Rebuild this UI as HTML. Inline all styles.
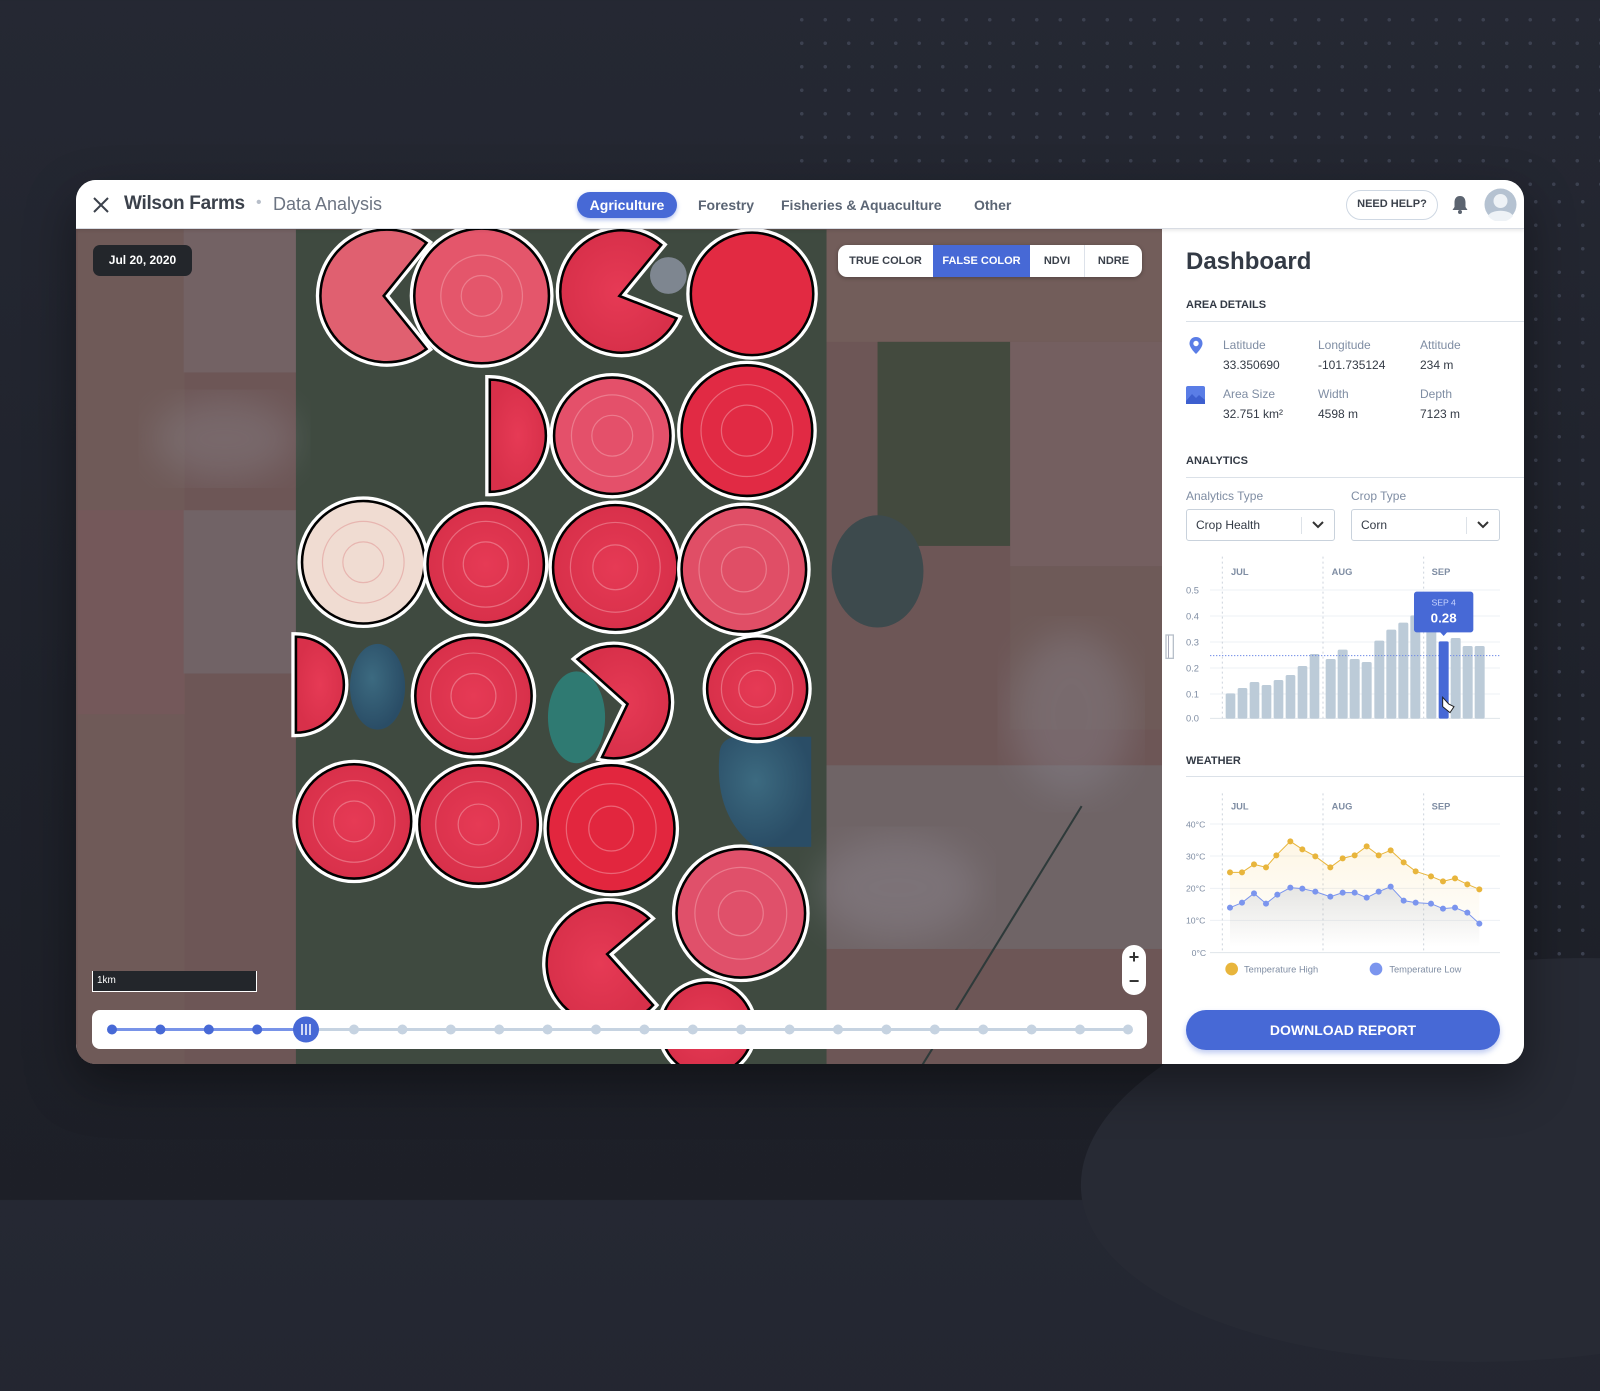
<!DOCTYPE html>
<html><head><meta charset="utf-8"><style>
*{margin:0;padding:0;box-sizing:border-box}
body{width:1600px;height:1200px;overflow:hidden;background:linear-gradient(180deg,#252833 0%,#1f222b 60%,#1d1f27 100%);font-family:"Liberation Sans",sans-serif;position:relative}
.dots{position:absolute;background-image:radial-gradient(circle,#3c4150 1.6px,transparent 2px);background-size:23.5px 23.5px}
.card{position:absolute;left:76px;top:180px;width:1448px;height:884px;background:#fff;border-radius:20px;overflow:hidden;box-shadow:0 20px 50px rgba(0,0,0,.4)}
.hdr{position:absolute;left:0;top:0;width:1448px;height:49px;border-bottom:1px solid #d8dce3;box-shadow:0 2px 3px rgba(0,0,0,.08);z-index:3;background:#fff}
.abs{position:absolute}
.t{position:absolute;white-space:nowrap}
.lbl{font-size:12px;color:#7f8da3}
.val{font-size:12px;color:#333a45}
.sec{font-size:11px;font-weight:bold;color:#333a45}
</style></head><body>
<div class="dots" style="left:790px;top:8px;width:810px;height:185px"></div>
<div class="dots" style="left:1524px;top:190px;width:76px;height:800px"></div>
<div class="abs" style="left:1080px;top:960px;width:900px;height:400px;border-radius:50%;background:#272a34;transform:rotate(-4deg)"></div>

<div class="card">
 <div class="hdr">
  <svg class="abs" style="left:16px;top:16px" width="18" height="18"><path d="M2 2L16 16M16 2L2 16" stroke="#3b414b" stroke-width="2"/></svg>
  <div class="t" style="left:48px;top:13px;font-size:19px;font-weight:bold;color:#3b414b;letter-spacing:-0.3px">Wilson Farms</div>
  <div class="t" style="left:180px;top:14px;font-size:16px;color:#b7bec9">•</div>
  <div class="t" style="left:197px;top:14px;font-size:18px;color:#6c7482">Data Analysis</div>
  <div class="t" style="left:501px;top:12px;width:100px;height:26px;border-radius:13px;background:#4769d6;color:#fff;font-size:14px;font-weight:bold;text-align:center;line-height:26px;box-shadow:0 2px 4px rgba(71,105,214,.4)">Agriculture</div>
  <div class="t" style="left:622px;top:17px;font-size:14px;font-weight:bold;color:#5b6574">Forestry</div>
  <div class="t" style="left:705px;top:17px;font-size:14px;font-weight:bold;color:#5b6574">Fisheries &amp; Aquaculture</div>
  <div class="t" style="left:898px;top:17px;font-size:14px;font-weight:bold;color:#5b6574">Other</div>
  <div class="t" style="left:1270px;top:10px;width:92px;height:30px;border-radius:15px;border:1.5px solid #cfd8e3;font-size:11px;font-weight:bold;color:#3b414b;text-align:center;line-height:27px">NEED HELP?</div>
  <svg class="abs" style="left:1375px;top:15px" width="18" height="20"><path d="M9 1C5 1 3.5 4 3.5 7.5V12L1.5 15H16.5L14.5 12V7.5C14.5 4 13 1 9 1Z" fill="#5c6470"/><circle cx="9" cy="17" r="2" fill="#5c6470"/></svg>
  <svg class="abs" style="left:1408px;top:8px" width="33" height="33"><circle cx="16.5" cy="16.5" r="16" fill="#b5c2d1"/><circle cx="16.5" cy="13" r="7" fill="#eef2f6"/><path d="M4 28C7 21 26 21 29 28A16 16 0 0 1 4 28Z" fill="#eef2f6"/></svg>
 </div>

 <div class="abs" style="left:0;top:49px;width:1086px;height:835px;overflow:hidden;background:#6a5352">
  <svg class="abs" style="left:-76px;top:-229px" width="1162" height="1064">
   <defs>
    <radialGradient id="rg" cx="50%" cy="50%" r="50%"><stop offset="0" stop-color="#e63a55"/><stop offset="1" stop-color="#d8304a"/></radialGradient>
    <radialGradient id="pond" cx="40%" cy="40%" r="60%"><stop offset="0" stop-color="#3c6a80"/><stop offset="1" stop-color="#2a4d66"/></radialGradient>
    <filter id="bl"><feGaussianBlur stdDeviation="18"/></filter>
   </defs>
   <g transform="scale(1.0204)">
    <rect x="76" y="225" width="1065" height="820" fill="#6d5656"/>
    <rect x="76" y="225" width="105" height="820" fill="#6f5a58"/>
    <rect x="76" y="500" width="105" height="200" fill="#74585a"/>
    <rect x="180" y="225" width="115" height="140" fill="#736264"/>
    <rect x="180" y="500" width="115" height="160" fill="#716366"/>
    <rect x="805" y="225" width="340" height="110" fill="#725d5a"/>
    <rect x="860" y="335" width="130" height="200" fill="#434a3e"/>
    <rect x="990" y="335" width="150" height="220" fill="#745f60"/>
    <rect x="990" y="555" width="150" height="160" fill="#6e5a58"/>
    <rect x="810" y="750" width="330" height="180" fill="#6f6466"/>
    <rect x="290" y="225" width="520" height="820" fill="#3f4a40"/>
    <ellipse cx="220" cy="430" rx="70" ry="40" fill="#8d8a92" opacity=".35" filter="url(#bl)"/>
    <ellipse cx="1050" cy="700" rx="60" ry="80" fill="#8d8a96" opacity=".35" filter="url(#bl)"/>
    <ellipse cx="880" cy="870" rx="80" ry="50" fill="#9a94a0" opacity=".3" filter="url(#bl)"/>
    <ellipse cx="860" cy="560" rx="45" ry="55" fill="#3d4a4d"/>
    <path d="M1060 790L900 1050" stroke="#2e3a3a" stroke-width="2"/>
    <ellipse cx="370" cy="673" rx="27" ry="42" fill="url(#pond)"/>
    <ellipse cx="565" cy="703" rx="28" ry="45" fill="#2f7a72"/>
    <path d="M705 740Q705 725 720 722L795 722V830L740 830Q700 800 705 740Z" fill="url(#pond)"/>
    <circle cx="655" cy="270" r="18" fill="#7e8690"/>
    <g stroke="#000" stroke-width="2.5">
     <g fill="url(#rg)">
      <path d="M418 238A65 65 0 1 0 418 342L376 290Z" fill="#e06070" stroke="#fff" stroke-width="9"/>
      <path d="M418 238A65 65 0 1 0 418 342L376 290Z" fill="#e06070"/>
      <circle cx="472" cy="290" r="66" fill="#e4566b" stroke="#fff" stroke-width="9"/><circle cx="472" cy="290" r="66" fill="#e4566b"/>
      <path d="M648 240A60 60 0 1 0 663 312L607 290Z" stroke="#fff" stroke-width="9"/><path d="M648 240A60 60 0 1 0 663 312L607 290Z"/>
      <circle cx="737" cy="288" r="60" stroke="#fff" stroke-width="9"/><circle cx="737" cy="288" r="60" fill="#e22a42"/>
      <path d="M480 372A55 55 0 0 1 480 482Z" stroke="#fff" stroke-width="9"/><path d="M480 372A55 55 0 0 1 480 482Z"/>
      <circle cx="600" cy="427" r="57" stroke="#fff" stroke-width="9"/><circle cx="600" cy="427" r="57" fill="#e4506a"/>
      <circle cx="732" cy="422" r="64" stroke="#fff" stroke-width="9"/><circle cx="732" cy="422" r="64" fill="#e12a44"/>
      <circle cx="356" cy="551" r="60" fill="#f2dfd6" stroke="#fff" stroke-width="9"/><circle cx="356" cy="551" r="60" fill="#f0dcd2"/>
      <circle cx="476" cy="553" r="57" stroke="#fff" stroke-width="9"/><circle cx="476" cy="553" r="57"/>
      <circle cx="603" cy="556" r="61" stroke="#fff" stroke-width="9"/><circle cx="603" cy="556" r="61"/>
      <circle cx="729" cy="558" r="61" stroke="#fff" stroke-width="9"/><circle cx="729" cy="558" r="61" fill="#e04e66"/>
      <path d="M290 624A45 45 0 0 1 290 718Z" stroke="#fff" stroke-width="9"/><path d="M290 624A45 45 0 0 1 290 718Z"/>
      <circle cx="464" cy="682" r="57" stroke="#fff" stroke-width="9"/><circle cx="464" cy="682" r="57"/>
      <path d="M566 646A55 55 0 1 1 590 742L615 690Z" stroke="#fff" stroke-width="9"/><path d="M566 646A55 55 0 1 1 590 742L615 690Z"/>
      <circle cx="742" cy="675" r="49" stroke="#fff" stroke-width="9"/><circle cx="742" cy="675" r="49"/>
      <circle cx="347" cy="805" r="56" stroke="#fff" stroke-width="9"/><circle cx="347" cy="805" r="56"/>
      <circle cx="469" cy="808" r="58" stroke="#fff" stroke-width="9"/><circle cx="469" cy="808" r="58"/>
      <circle cx="599" cy="812" r="62" stroke="#fff" stroke-width="9"/><circle cx="599" cy="812" r="62" fill="#e2263e"/>
      <circle cx="726" cy="895" r="63" stroke="#fff" stroke-width="9"/><circle cx="726" cy="895" r="63" fill="#e0506a"/>
      <path d="M636 900A60 60 0 1 0 640 985L595 935Z" stroke="#fff" stroke-width="9"/><path d="M636 900A60 60 0 1 0 640 985L595 935Z"/>
      <circle cx="693" cy="1008" r="45" stroke="#fff" stroke-width="9"/><circle cx="693" cy="1008" r="45"/>
     </g>
    </g>
    <g fill="none" stroke="#f7b0b8" stroke-width="1.2" opacity=".45">
     <circle cx="472" cy="290" r="20"/><circle cx="472" cy="290" r="40"/><circle cx="600" cy="427" r="20"/><circle cx="600" cy="427" r="40"/>
     <circle cx="732" cy="422" r="25"/><circle cx="732" cy="422" r="45"/><circle cx="476" cy="553" r="22"/><circle cx="476" cy="553" r="42"/>
     <circle cx="603" cy="556" r="22"/><circle cx="603" cy="556" r="44"/><circle cx="729" cy="558" r="22"/><circle cx="729" cy="558" r="44"/>
     <circle cx="464" cy="682" r="22"/><circle cx="464" cy="682" r="42"/><circle cx="742" cy="675" r="18"/><circle cx="742" cy="675" r="35"/>
     <circle cx="347" cy="805" r="20"/><circle cx="347" cy="805" r="40"/><circle cx="469" cy="808" r="20"/><circle cx="469" cy="808" r="42"/>
     <circle cx="599" cy="812" r="22"/><circle cx="599" cy="812" r="44"/><circle cx="726" cy="895" r="22"/><circle cx="726" cy="895" r="45"/>
     <circle cx="356" cy="551" r="20" stroke="#d88"/><circle cx="356" cy="551" r="40" stroke="#d88"/>
    </g>
   </g>
  </svg>
  <div class="t" style="left:17px;top:16px;width:99px;height:31px;border-radius:7px;background:#23262b;color:#fff;font-size:12px;font-weight:bold;text-align:center;line-height:31px">Jul 20, 2020</div>
  <div class="abs" style="left:762px;top:16px;width:304px;height:32px;border-radius:9px;background:#fff;overflow:hidden;font-size:11px;font-weight:bold;color:#3b414b;box-shadow:0 1px 4px rgba(0,0,0,.3)">
   <div class="t" style="left:0;top:0;width:95px;height:32px;line-height:32px;text-align:center">TRUE COLOR</div>
   <div class="t" style="left:95px;top:0;width:97px;height:32px;line-height:32px;text-align:center;background:#4769d6;color:#fff">FALSE COLOR</div>
   <div class="t" style="left:192px;top:0;width:55px;height:32px;line-height:32px;text-align:center;border-right:1px solid #dde2ea">NDVI</div>
   <div class="t" style="left:247px;top:0;width:57px;height:32px;line-height:32px;text-align:center">NDRE</div>
  </div>
  <div class="t" style="left:16px;top:742px;width:165px;height:21px;background:#23262b;border:1.5px solid #fff;border-top:none;color:#fff;font-size:10px;padding:4px 4px">1km</div>
  <div class="abs" style="left:1046px;top:716px;width:24px;height:50px;border-radius:12px;background:#fff;font-size:18px;color:#333;text-align:center;line-height:24px;font-weight:bold">+<br>−</div>
  <div class="abs" style="left:16px;top:781px;width:1055px;height:39px;border-radius:8px;background:#fff"></div>
  <svg class="abs" style="left:16px;top:781px" width="1055" height="39">
   <line x1="20" y1="19.5" x2="1036" y2="19.5" stroke="#c6d3e1" stroke-width="3"/>
   <line x1="20" y1="19.5" x2="214" y2="19.5" stroke="#7893e8" stroke-width="3"/>
   <g fill="#4769d6"><circle cx="20" cy="19.5" r="5"/><circle cx="68.4" cy="19.5" r="5"/><circle cx="116.8" cy="19.5" r="5"/><circle cx="165.2" cy="19.5" r="5"/></g>
   <g fill="#c6d3e1">
    <circle cx="262" cy="19.5" r="5"/><circle cx="310.4" cy="19.5" r="5"/><circle cx="358.8" cy="19.5" r="5"/><circle cx="407.2" cy="19.5" r="5"/><circle cx="455.6" cy="19.5" r="5"/><circle cx="504" cy="19.5" r="5"/><circle cx="552.4" cy="19.5" r="5"/><circle cx="600.8" cy="19.5" r="5"/><circle cx="649.2" cy="19.5" r="5"/><circle cx="697.6" cy="19.5" r="5"/><circle cx="746" cy="19.5" r="5"/><circle cx="794.4" cy="19.5" r="5"/><circle cx="842.8" cy="19.5" r="5"/><circle cx="891.2" cy="19.5" r="5"/><circle cx="939.6" cy="19.5" r="5"/><circle cx="988" cy="19.5" r="5"/><circle cx="1036" cy="19.5" r="5"/>
   </g>
   <circle cx="214" cy="19.5" r="13" fill="#4769d6"/>
   <path d="M210 14V25M214 14V25M218 14V25" stroke="#fff" stroke-width="1.5"/>
  </svg>
 </div>

 <div class="abs" style="left:1086px;top:49px;width:362px;height:835px;background:#fff">
  <div class="t" style="left:24px;top:19px;font-size:24px;font-weight:bold;color:#333a45">Dashboard</div>
  <div class="t sec" style="left:24px;top:70px">AREA DETAILS</div>
  <div class="abs" style="left:24px;top:92px;width:338px;height:1px;background:#dbe1e8"></div>
  <svg class="abs" style="left:26px;top:107px" width="16" height="20"><path d="M8 1C4 1 1.5 4 1.5 7.5C1.5 12 8 18 8 18S14.5 12 14.5 7.5C14.5 4 12 1 8 1Z" fill="#5a7de6"/><circle cx="8" cy="7.5" r="2.7" fill="#fff"/></svg>
  <svg class="abs" style="left:24px;top:157px" width="20" height="18"><rect width="19" height="18" rx="2" fill="#5a7de6"/><path d="M0 15L6 8L10 12L13 9L19 14V18H0Z" fill="#3d5fcf"/></svg>
  <div class="t lbl" style="left:61px;top:109px">Latitude</div><div class="t val" style="left:61px;top:129px">33.350690</div>
  <div class="t lbl" style="left:156px;top:109px">Longitude</div><div class="t val" style="left:156px;top:129px">-101.735124</div>
  <div class="t lbl" style="left:258px;top:109px">Attitude</div><div class="t val" style="left:258px;top:129px">234 m</div>
  <div class="t lbl" style="left:61px;top:158px">Area Size</div><div class="t val" style="left:61px;top:178px">32.751 km²</div>
  <div class="t lbl" style="left:156px;top:158px">Width</div><div class="t val" style="left:156px;top:178px">4598 m</div>
  <div class="t lbl" style="left:258px;top:158px">Depth</div><div class="t val" style="left:258px;top:178px">7123 m</div>
  <div class="t sec" style="left:24px;top:226px">ANALYTICS</div>
  <div class="abs" style="left:24px;top:248px;width:338px;height:1px;background:#dbe1e8"></div>
  <div class="t lbl" style="left:24px;top:260px">Analytics Type</div>
  <div class="t lbl" style="left:189px;top:260px">Crop Type</div>
  <div class="abs" style="left:24px;top:280px;width:149px;height:32px;border:1px solid #c9d2dc;border-radius:3px"><div class="t val" style="left:9px;top:8px">Crop Health</div><div class="abs" style="left:114px;top:7px;width:1px;height:17px;background:#dde2e8"></div><svg class="abs" style="left:124px;top:10px" width="14" height="10"><path d="M2 2L7 7L12 2" fill="none" stroke="#333" stroke-width="2"/></svg></div>
  <div class="abs" style="left:189px;top:280px;width:149px;height:32px;border:1px solid #c9d2dc;border-radius:3px"><div class="t val" style="left:9px;top:8px">Corn</div><div class="abs" style="left:114px;top:7px;width:1px;height:17px;background:#dde2e8"></div><svg class="abs" style="left:124px;top:10px" width="14" height="10"><path d="M2 2L7 7L12 2" fill="none" stroke="#333" stroke-width="2"/></svg></div>
  <div class="t sec" style="left:24px;top:526px">WEATHER</div>
  <div class="abs" style="left:24px;top:547px;width:338px;height:1px;background:#dbe1e8"></div>
  <div class="t" style="left:24px;top:781px;width:314px;height:40px;border-radius:20px;background:#4769d6;color:#fff;font-size:14px;font-weight:bold;text-align:center;line-height:40px;box-shadow:0 3px 6px rgba(71,105,214,.35)">DOWNLOAD REPORT</div>
 </div>
 <div class="abs" style="left:1092px;top:455px;width:6px;height:24px;border-left:1px solid #aab;border-right:1px solid #aab"></div>
</div>

<svg class="abs" style="left:0;top:0;pointer-events:none" width="1600" height="1200">
 <defs><linearGradient id="hf" x1="0" y1="0" x2="0" y2="1"><stop offset="0" stop-color="#f5c451" stop-opacity=".15"/><stop offset="1" stop-color="#f5c451" stop-opacity="0"/></linearGradient>
 <linearGradient id="lf" x1="0" y1="0" x2="0" y2="1"><stop offset="0" stop-color="#9aa6bd" stop-opacity=".25"/><stop offset="1" stop-color="#9aa6bd" stop-opacity="0"/></linearGradient></defs>
 <g transform="translate(1160,550) scale(0.33333)" font-family="Liberation Sans, sans-serif">
  <g stroke="#edf0f4" stroke-width="3"><line x1="150" y1="120" x2="1020" y2="120"/><line x1="150" y1="198" x2="1020" y2="198"/><line x1="150" y1="276" x2="1020" y2="276"/><line x1="150" y1="354" x2="1020" y2="354"/><line x1="150" y1="432" x2="1020" y2="432"/></g>
  <line x1="150" y1="505" x2="1020" y2="505" stroke="#dfe4ea" stroke-width="3"/>
  <g stroke="#ccd3dc" stroke-width="3" stroke-dasharray="6 9"><line x1="187" y1="20" x2="187" y2="505"/><line x1="489" y1="20" x2="489" y2="505"/><line x1="791" y1="20" x2="791" y2="505"/></g>
  <g font-size="28" fill="#7f8da3" font-weight="bold"><text x="213" y="75">JUL</text><text x="515" y="75">AUG</text><text x="815" y="75">SEP</text></g>
  <g font-size="28" fill="#7f8da3"><text x="78" y="130">0.5</text><text x="78" y="208">0.4</text><text x="78" y="286">0.3</text><text x="78" y="364">0.2</text><text x="78" y="442">0.1</text><text x="78" y="515">0.0</text></g>
  <g fill="#bccbd8">
   <rect x="197" y="430" width="29" height="76" rx="5"/><rect x="233" y="414" width="29" height="92" rx="5"/><rect x="269" y="396" width="29" height="110" rx="5"/><rect x="305" y="405" width="29" height="101" rx="5"/><rect x="341" y="390" width="29" height="116" rx="5"/><rect x="377" y="375" width="29" height="131" rx="5"/><rect x="413" y="348" width="29" height="158" rx="5"/><rect x="449" y="312" width="29" height="194" rx="5"/><rect x="497" y="327" width="30" height="179" rx="5"/><rect x="533" y="299" width="30" height="207" rx="5"/><rect x="569" y="327" width="30" height="179" rx="5"/><rect x="605" y="336" width="30" height="170" rx="5"/><rect x="643" y="272" width="30" height="234" rx="5"/><rect x="679" y="239" width="30" height="267" rx="5"/><rect x="715" y="218" width="30" height="288" rx="5"/><rect x="751" y="196" width="30" height="310" rx="5"/><rect x="799" y="200" width="30" height="306" rx="5"/><rect x="872" y="264" width="30" height="242" rx="5"/><rect x="908" y="288" width="30" height="218" rx="5"/><rect x="944" y="288" width="30" height="218" rx="5"/>
  </g>
  <line x1="150" y1="317" x2="1020" y2="317" stroke="#6f8be6" stroke-width="3" stroke-dasharray="4 5"/>
  <rect x="836" y="274" width="30" height="232" rx="5" fill="#4769d6"/>
  <rect x="762" y="125" width="178" height="122" rx="8" fill="#4769d6"/>
  <path d="M840 246L851 258L862 246Z" fill="#4769d6"/>
  <text x="851" y="166" font-size="26" fill="#c8d4ff" text-anchor="middle">SEP 4</text>
  <text x="851" y="218" font-size="40" fill="#fff" font-weight="bold" text-anchor="middle">0.28</text>
  <path d="M848 442V470L870 488L882 470L866 462Z" fill="#fff" stroke="#222" stroke-width="3"/>
  <rect x="18" y="255" width="22" height="70" fill="none" stroke="#b8c0ca" stroke-width="4"/>
  <g stroke="#edf0f4" stroke-width="3"><line x1="150" y1="822" x2="1020" y2="822"/><line x1="150" y1="918" x2="1020" y2="918"/><line x1="150" y1="1015" x2="1020" y2="1015"/><line x1="150" y1="1111" x2="1020" y2="1111"/></g>
  <line x1="150" y1="1208" x2="1020" y2="1208" stroke="#dfe4ea" stroke-width="3"/>
  <g stroke="#ccd3dc" stroke-width="3" stroke-dasharray="6 9"><line x1="187" y1="730" x2="187" y2="1208"/><line x1="489" y1="730" x2="489" y2="1208"/><line x1="791" y1="730" x2="791" y2="1208"/></g>
  <g font-size="28" fill="#7f8da3" font-weight="bold"><text x="213" y="778">JUL</text><text x="515" y="778">AUG</text><text x="815" y="778">SEP</text></g>
  <g font-size="26" fill="#7f8da3"><text x="78" y="832">40°C</text><text x="78" y="928">30°C</text><text x="78" y="1025">20°C</text><text x="78" y="1121">10°C</text><text x="95" y="1218">0°C</text></g>
  <path d="M210 967L246 967L282 943L318 952L349 916L391 874L427 898L466 919L511 952L548 925L584 916L620 889L656 916L692 901L731 937L767 964L813 979L849 994L885 985L922 1003L958 1018L958 1190L210 1190Z" fill="url(#hf)"/>
  <path d="M210 1073L246 1058L282 1030L318 1061L352 1034L391 1013L427 1016L466 1025L511 1040L548 1028L584 1028L620 1043L656 1025L692 1010L731 1052L767 1058L813 1061L849 1076L885 1073L922 1088L958 1121L958 1190L210 1190Z" fill="url(#lf)"/>
  <path d="M210 967L246 967L282 943L318 952L349 916L391 874L427 898L466 919L511 952L548 925L584 916L620 889L656 916L692 901L731 937L767 964L813 979L849 994L885 985L922 1003L958 1018" fill="none" stroke="#e8b53c" stroke-width="3"/>
  <path d="M210 1073L246 1058L282 1030L318 1061L352 1034L391 1013L427 1016L466 1025L511 1040L548 1028L584 1028L620 1043L656 1025L692 1010L731 1052L767 1058L813 1061L849 1076L885 1073L922 1088L958 1121" fill="none" stroke="#7b95ee" stroke-width="3"/>
  <g fill="#e8b53c"><circle cx="210" cy="967" r="9"/><circle cx="246" cy="967" r="9"/><circle cx="282" cy="943" r="9"/><circle cx="318" cy="952" r="9"/><circle cx="349" cy="916" r="9"/><circle cx="391" cy="874" r="9"/><circle cx="427" cy="898" r="9"/><circle cx="466" cy="919" r="9"/><circle cx="511" cy="952" r="9"/><circle cx="548" cy="925" r="9"/><circle cx="584" cy="916" r="9"/><circle cx="620" cy="889" r="9"/><circle cx="656" cy="916" r="9"/><circle cx="692" cy="901" r="9"/><circle cx="731" cy="937" r="9"/><circle cx="767" cy="964" r="9"/><circle cx="813" cy="979" r="9"/><circle cx="849" cy="994" r="9"/><circle cx="885" cy="985" r="9"/><circle cx="922" cy="1003" r="9"/><circle cx="958" cy="1018" r="9"/></g>
  <g fill="#7b95ee"><circle cx="210" cy="1073" r="9"/><circle cx="246" cy="1058" r="9"/><circle cx="282" cy="1030" r="9"/><circle cx="318" cy="1061" r="9"/><circle cx="352" cy="1034" r="9"/><circle cx="391" cy="1013" r="9"/><circle cx="427" cy="1016" r="9"/><circle cx="466" cy="1025" r="9"/><circle cx="511" cy="1040" r="9"/><circle cx="548" cy="1028" r="9"/><circle cx="584" cy="1028" r="9"/><circle cx="620" cy="1043" r="9"/><circle cx="656" cy="1025" r="9"/><circle cx="692" cy="1010" r="9"/><circle cx="731" cy="1052" r="9"/><circle cx="767" cy="1058" r="9"/><circle cx="813" cy="1061" r="9"/><circle cx="849" cy="1076" r="9"/><circle cx="885" cy="1073" r="9"/><circle cx="922" cy="1088" r="9"/><circle cx="958" cy="1121" r="9"/></g>
  <circle cx="215" cy="1257" r="19" fill="#e8b53c"/><text x="252" y="1267" font-size="28" fill="#7f8da3">Temperature High</text>
  <circle cx="648" cy="1257" r="19" fill="#7b95ee"/><text x="688" y="1267" font-size="28" fill="#7f8da3">Temperature Low</text>
 </g>
</svg>
</body></html>
